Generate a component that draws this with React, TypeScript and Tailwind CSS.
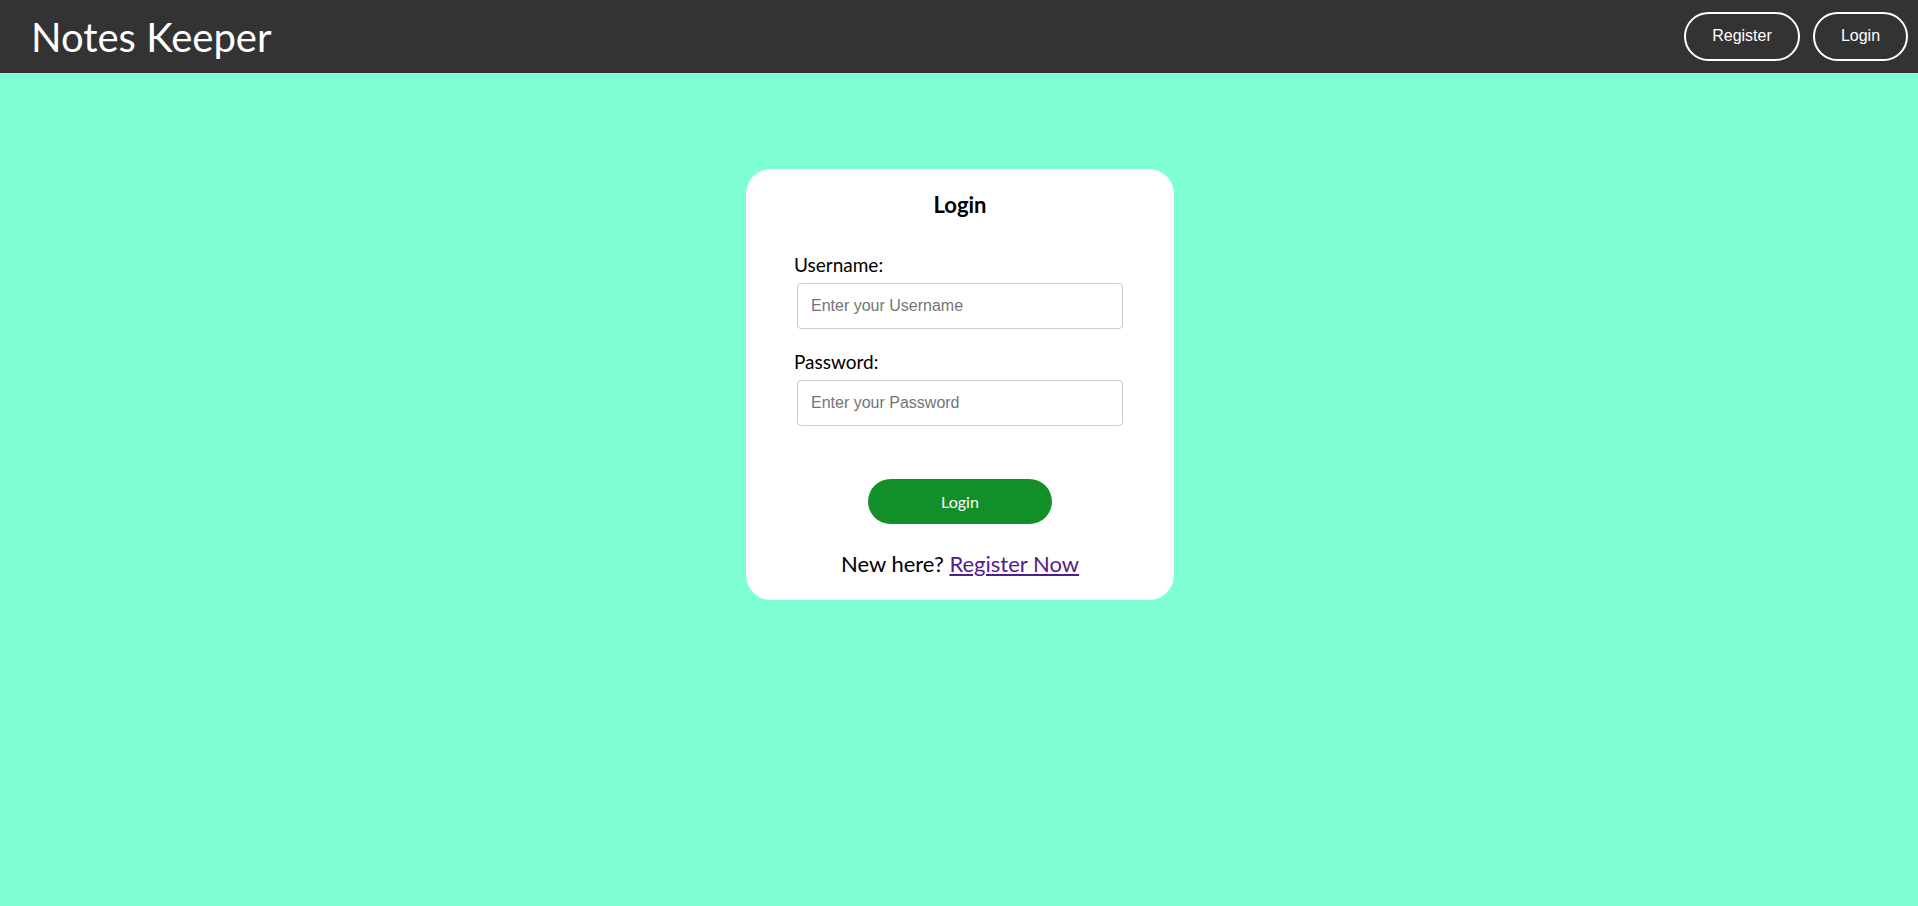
export default function App() {
  return (
    <div className="min-h-[906px] bg-[#7fffd4] font-['Lato','Noto_Sans',sans-serif]">
      {/* Top bar */}
      <header className="flex h-[73px] items-center justify-between bg-[#333333] pl-[31px] pr-[10px]">
        <h1 className="text-[40px] leading-[48px] font-normal text-white">Notes Keeper</h1>
        <nav className="flex items-center gap-[13px] font-['Liberation_Sans',Arial,sans-serif]">
          <button className="h-[49px] w-[116px] rounded-full border-2 border-white pb-[2px] text-[16px] text-white">
            Register
          </button>
          <button className="h-[49px] w-[95px] rounded-full border-2 border-white pb-[2px] text-[16px] text-white">
            Login
          </button>
        </nav>
      </header>

      {/* Login card */}
      <main className="flex justify-center pt-[96px] pl-[2px]">
        <form className="flex w-[428px] flex-col rounded-[25px] bg-white px-[48px] pt-[23px] pb-[23px]">
          <h2 className="text-center text-[22px] leading-[26px] font-bold text-black">Login</h2>

          <label className="mt-[35px] text-[19px] leading-[23px] text-black">Username:</label>
          <input
            type="text"
            placeholder="Enter your Username"
            className="mt-[7px] ml-[3px] h-[46px] w-[326px] rounded-[4px] border border-[#cccccc] px-[13px] font-['Liberation_Sans',Arial,sans-serif] text-[16px] placeholder:text-[#757575] outline-none"
          />

          <label className="mt-[21px] text-[19px] leading-[23px] text-black">Password:</label>
          <input
            type="password"
            placeholder="Enter your Password"
            className="mt-[7px] ml-[3px] h-[46px] w-[326px] rounded-[4px] border border-[#cccccc] px-[13px] font-['Liberation_Sans',Arial,sans-serif] text-[16px] placeholder:text-[#757575] outline-none"
          />

          <button
            type="button"
            className="mx-auto mt-[53px] h-[45px] w-[184px] rounded-full bg-[#138f29] text-[16px] text-white"
          >
            Login
          </button>

          <p className="mt-[27px] text-center text-[22px] leading-[26px] text-black">
            New here?{" "}
            <a href="#" className="text-[#551a8b] underline">
              Register Now
            </a>
          </p>
        </form>
      </main>
    </div>
  );
}
